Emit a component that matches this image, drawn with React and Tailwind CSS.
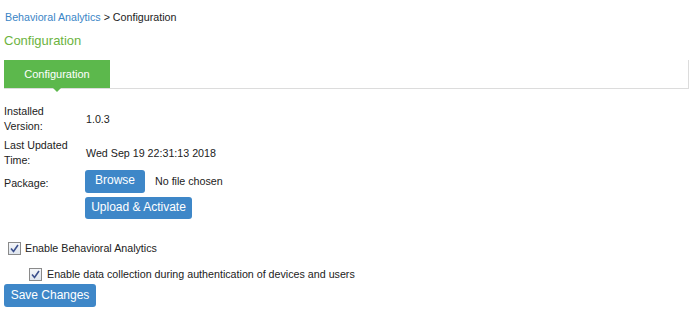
export default function App() {
  const Check = ({ className = "" }) => (
    <span className={`inline-flex shrink-0 items-center justify-center w-[13px] h-[13px] border border-[#8a8a8a] bg-gradient-to-b from-[#f4f6f9] to-[#dfe5ee] ${className}`}>
      <svg width="9" height="9" viewBox="0 0 9 9">
        <path d="M1 4.5 L3.5 7.5 L8 1" stroke="#3b4f8c" strokeWidth="1.6" fill="none" />
      </svg>
    </span>
  );
  return (
    <div className="w-[696px] h-[334px] bg-white text-[10.7px] leading-[13px] text-[#222] font-['Liberation_Sans',Arial,sans-serif]">
      <div className="pt-[11px] pl-[5px] leading-[13px]">
        <span className="text-[#3a85c6]">Behavioral Analytics</span>
        <span> &gt; Configuration</span>
      </div>
      <div className="pl-[4px] mt-[9px] text-[13px] leading-[16px] text-[#6cb33e]">Configuration</div>
      <div className="ml-[4px] mr-[7px] mt-[11px] flex border-b border-r border-[#dcdcdc] h-[29px]">
        <div className="relative w-[106px] h-[28px] bg-[#5cb84c] text-white text-[11px] flex items-center justify-center">
          Configuration
          <span className="absolute left-[49px] top-[28px] w-0 h-0 border-l-[4px] border-r-[4px] border-t-[4px] border-l-transparent border-r-transparent border-t-[#5cb84c]" />
        </div>
      </div>
      <div className="pl-[4px] mt-[16px]">
        <div className="flex items-center h-[28px]">
          <div className="w-[80px] leading-[15px]">Installed<br />Version:</div>
          <div className="pl-[2px]">1.0.3</div>
        </div>
        <div className="flex items-center h-[28px] mt-[6px]">
          <div className="w-[80px] leading-[15px]">Last Updated<br />Time:</div>
          <div className="pl-[2px]">Wed Sep 19 22:31:13 2018</div>
        </div>
        <div className="flex mt-[3px]">
          <div className="w-[81px] pt-[7px]">Package:</div>
          <div className="flex flex-col gap-[4px]">
            <div className="flex items-center">
              <div className="w-[60px] h-[23px] rounded-[3px] bg-[#3e87c8] text-white text-[12px] flex items-center justify-center pb-[2px]">Browse</div>
              <span className="ml-[10px]">No file chosen</span>
            </div>
            <div className="w-[107px] h-[22px] rounded-[3px] bg-[#3e87c8] text-white text-[12px] flex items-center justify-center pb-[1px]">Upload &amp; Activate</div>
          </div>
        </div>
      </div>
      <div className="flex items-center mt-[23px] pl-[8px]">
        <Check />
        <span className="ml-[4px]">Enable Behavioral Analytics</span>
      </div>
      <div className="flex items-center mt-[13px] pl-[29px]">
        <Check />
        <span className="ml-[5px]">Enable data collection during authentication of devices and users</span>
      </div>
      <div className="pl-[4px] mt-[3px]">
        <div className="w-[92px] h-[23px] rounded-[3px] bg-[#3e87c8] text-white text-[12px] flex items-center justify-center">Save Changes</div>
      </div>
    </div>
  );
}
